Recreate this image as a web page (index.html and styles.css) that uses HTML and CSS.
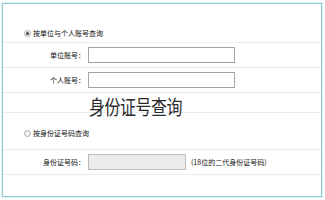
FILE: index.html
```html
<!DOCTYPE html>
<html lang="zh-CN">
<head>
    <meta charset="UTF-8">
    <title>查询</title>
    <link rel="stylesheet" href="styles.css">
</head>
<body>
    <div class="query-box">
        <div class="row radio-row first">
            <span class="radio checked"></span>
            <span class="radio-text">按单位与个人账号查询</span>
        </div>
        <div class="row field-row">
            <span class="label">单位账号：</span>
            <span class="input"></span>
        </div>
        <div class="row field-row">
            <span class="label">个人账号：</span>
            <span class="input"></span>
        </div>
        <div class="row spacer"></div>
        <div class="row radio-row second">
            <span class="radio"></span>
            <span class="radio-text">按身份证号码查询</span>
        </div>
        <div class="row field-row">
            <span class="label">身份证号码：</span>
            <span class="input short disabled"></span>
            <span class="hint">(18位的二代身份证号码)</span>
        </div>
        <div class="row last"></div>

        <div class="caption">身份证号查询</div>
    </div>
</body>
</html>
```

FILE: styles.css
```css
body {
    margin: 0;
    background: #fff;
    font-family: "Noto Sans CJK SC", "Noto Sans", sans-serif;
    color: #333;
}
.query-box {
    position: relative;
    margin: 3px 3px 3px 2px;
    height: 192px;
    border: 1px solid #94cbd2;
    box-shadow: 0 0 0 1px #dcf0f2;
    display: flex;
    flex-direction: column;
    background: #fff;
}
.row {
    box-sizing: border-box;
    border-bottom: 1px solid #e8eef0;
    display: flex;
    align-items: center;
    flex: none;
}
.radio-row {
    align-items: flex-start;
    padding-left: 21px;
}
.radio-row.first {
    height: 39px;
    padding-top: 25px;
}
.radio-row.second {
    height: 37px;
    padding-top: 16px;
}
.field-row {
    height: 25px;
}
.spacer {
    height: 20px;
}
.last {
    flex: 1;
    border-bottom: none;
}
.radio {
    width: 5px;
    height: 5px;
    border: 1px solid #aaa;
    border-radius: 50%;
    background: #f2f2f2;
    margin-right: 2px;
    margin-top: 1px;
    position: relative;
}
.radio.checked::after {
    content: "";
    position: absolute;
    left: 1px;
    top: 1px;
    width: 3px;
    height: 3px;
    border-radius: 50%;
    background: #444;
}
.radio-text, .label, .hint {
    font-size: 7px;
    line-height: 8px;
    color: #111;
}
.label {
    width: 82px;
    text-align: right;
    margin-right: 3px;
}
.input {
    box-sizing: border-box;
    width: 147px;
    height: 16px;
    border: 1px solid #a4a4a4;
    background: #fff;
}
.input.short {
    width: 98px;
}
.input.disabled {
    background: #ececec;
    border-color: #bbb;
}
.hint {
    margin-left: 5px;
}
.caption {
    position: absolute;
    left: 86px;
    top: 90px;
    font-size: 16px;
    line-height: 20px;
    color: #2a2a2a;
    transform: scaleY(1.25);
    transform-origin: left top;
    letter-spacing: -0.5px;
}
```
